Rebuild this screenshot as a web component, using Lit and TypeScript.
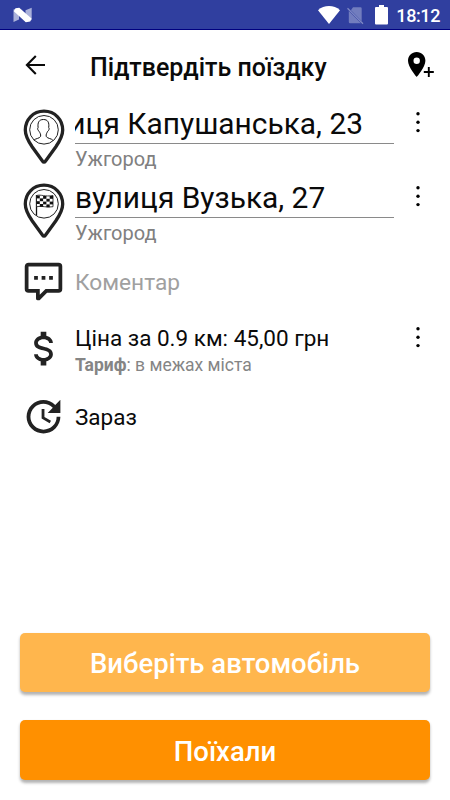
import { LitElement, html, css, svg, nothing } from "lit";
import { customElement, property } from "lit/decorators.js";

const base = css`
  :host { display: block; font-family: Roboto, "Noto Sans", sans-serif; color: #0a0a0a; }
  svg { display: block; }
  * { box-sizing: border-box; }
`;

const pinOutline = svg`
  <path d="M23 2.200C11.800 2.200 4.300 10.800 4.300 21c0 6.800 3.600 12 6.800 16.700L21.600 52.200c.8 1.100 2 1.100 2.800 0L34.900 37.700C38.100 33 41.700 27.800 41.700 21 41.700 10.800 34.200 2.200 23 2.200z" fill="#fff" stroke="#222" stroke-width="3.300"/>
  <circle cx="23" cy="20.800" r="14.300" fill="none" stroke="#222" stroke-width="1"/>`;

const flagCells = [
  [0, 0], [2, 0], [4, 0], [1, 1], [3, 1], [0, 2], [2, 2], [4, 2], [1, 3], [3, 3],
];

const icons = {
  person: html`<svg width="46" height="56" viewBox="0 0 46 56">${pinOutline}
    <path d="M13.500 31.300c1.200-1.900 6-1.700 6.700-4 .4-2-.6-3.300-1.500-5-1.500-.8-1.800-3.300-1-3.700-.6-5 .8-8.100 5.300-8.100s6 3.100 5.300 8.100c.8.4.5 2.900-1 3.700-.8 1.700-1.900 3-1.500 5 .7 2.300 5.500 2.100 6.700 4" fill="none" stroke="#111" stroke-width="1" transform="translate(-.6 0)"/></svg>`,
  flag: html`<svg width="46" height="56" viewBox="0 0 46 56">${pinOutline}
    <path d="M15.500 12v20.500" stroke="#111" stroke-width="1.300"/>
    <path d="M15.500 12.500c5-1.300 8 1.500 16.500 0v11.200c-7 1.300-10-1.300-16.500 0z" fill="#fff" stroke="#111" stroke-width=".8"/>
    ${flagCells.map(([c, r]) => svg`<rect x=${15.5 + c * 3.3} y=${12.6 + r * 2.8 + (c > 1 ? 0.4 : 0)} width="3.300" height="2.800" fill="#111"/>`)}</svg>`,
  comment: html`<svg width="45" height="45" viewBox="0 0 24 24" fill="#222"><path d="M9,22A1,1 0 0,1 8,21V18H4A2,2 0 0,1 2,16V4C2,2.890 2.900,2 4,2H20A2,2 0 0,1 22,4V16A2,2 0 0,1 20,18H13.900L10.200,21.710C10,21.900 9.750,22 9.500,22H9M10,16V19.080L13.080,16H20V4H4V16H10M17,11H15V9H17V11M13,11H11V9H13V11M9,11H7V9H9V11Z"/></svg>`,
  dollar: html`<svg width="45" height="45" viewBox="0 0 24 24" fill="#222"><path d="M7,15H9C9,16.080 10.370,17 12,17C13.630,17 15,16.080 15,15C15,13.900 13.960,13.500 11.760,12.970C9.640,12.440 7,11.780 7,9C7,7.210 8.470,5.690 10.500,5.180V3H13.500V5.180C15.530,5.690 17,7.210 17,9H15C15,7.920 13.630,7 12,7C10.370,7 9,7.920 9,9C9,10.100 10.040,10.500 12.240,11.030C14.360,11.560 17,12.220 17,15C17,16.790 15.530,18.310 13.500,18.820V21H10.500V18.820C8.470,18.310 7,16.790 7,15Z"/></svg>`,
  clock: html`<svg width="45" height="45" viewBox="0 0 24 24" fill="#222"><path d="M21 10.120h-6.780l2.740-2.820c-2.730-2.700-7.150-2.800-9.880-.1-2.730 2.710-2.730 7.080 0 9.790s7.150 2.710 9.880 0C18.320 15.650 19 14.080 19 12.100h2c0 1.980-.88 4.550-2.640 6.290-3.510 3.480-9.210 3.480-12.720 0-3.500-3.470-3.530-9.110-.02-12.580s9.140-3.470 12.650 0L21 3v7.120zM12.500 8v4.250l3.500 2.080-.72 1.210L11 13V8h1.500z"/></svg>`,
};

@customElement("status-bar")
class StatusBar extends LitElement {
  static styles = [base, css`
    .bar { display: flex; align-items: flex-start; height: 30px; background: #303f9f; border-bottom: 1px solid #00007f; padding-left: 13px; }
    .logo { margin-top: 7px; }
    .system { display: flex; margin-left: auto; padding-right: 10px; color: #fff; }
    .wifi { margin: 6px 7px 0 0; }
    .sim { margin: 7px 11px 0 0; }
    .battery { margin: 5px 8px 0 0; }
    .time { font-size: 18px; line-height: 31px; font-weight: 500; letter-spacing: -0.4px; white-space: nowrap; }
  `];
  render() {
    return html`<div class="bar">
      <svg class="logo" width="20" height="16" viewBox="0 0 20 16">
        <path d="M.500 2.500L6 1v11.500L.500 15z M12.500 3.200L18.700.800V13L12.500 15z" fill="#aab1da"/>
        <path d="M.800 4.200L2.500 1.300 6.300.700 18.500 11.500 17.200 14.500 12.800 15.200z" fill="#fff"/>
      </svg>
      <div class="system">
        <svg class="wifi" width="22" height="18" viewBox="0 0 22 18"><path d="M11 18L0 4.300C6-1.300 16-1.300 22 4.300z" fill="#fff"/></svg>
        <svg class="sim" width="17" height="18" viewBox="0 0 17 18">
          <path d="M6 .300h7.500q1.200 0 1.200 1.200v12.800L3.900 3.300z M1.800 4L14 16.200H3q-1.200 0-1.200-1.200z" fill="#727dbe"/>
          <path d="M.500 1.300L16 16.800" stroke="#7f89c5" stroke-width="1.300"/>
        </svg>
        <svg class="battery" width="13" height="20" viewBox="0 0 13 20"><path d="M4 0h5v2h3q1 0 1 1v15.500q0 1-1 1H1q-1 0-1-1V3q0-1 1-1h3z" fill="#fff"/></svg>
        <span class="time">18:12</span>
      </div>
    </div>`;
  }
}

@customElement("top-bar")
class TopBar extends LitElement {
  static styles = [base, css`
    .bar { display: flex; align-items: center; height: 74px; padding: 0 15px 0 25px; }
    .back { margin-right: 44px; margin-bottom: 4px; }
    .title { font-size: 25px; font-weight: 500; white-space: nowrap; flex: 1; line-height: 30px; padding-top: 1px; }
    .pin { margin-bottom: 4px; }
  `];
  render() {
    return html`<div class="bar">
      <svg class="back" width="21" height="22" viewBox="0 0 21 22" fill="none" stroke="#0a0a0a" stroke-width="2.100"><path d="M20 11H2.500M10.800 2L1.900 11l8.900 9"/></svg>
      <div class="title">Підтвердіть поїздку</div>
      <svg class="pin" width="28" height="28" viewBox="0 0 28 28">
        <path fill-rule="evenodd" d="M9.700 1C4.900 1 1 4.900 1 9.700c0 6.500 8.700 16.300 8.700 16.300s8.700-9.800 8.700-16.300C18.400 4.900 14.500 1 9.700 1zm0 5.500a3.200 3.200 0 1 1 0 6.400 3.200 3.200 0 0 1 0-6.400z" fill="#000"/>
        <path d="M16.800 21h10M21.800 16v10" stroke="#000" stroke-width="1.900"/>
      </svg>
    </div>`;
  }
}

@customElement("form-row")
class FormRow extends LitElement {
  @property() icon: keyof typeof icons = "clock";
  @property({ type: Boolean }) menu = false;
  static styles = [base, css`
    .row { display: grid; grid-template-columns: 75px 319px 56px; height: 100%; }
    .icon { display: flex; align-items: center; padding-left: 21px; padding-bottom: var(--icon-lift, 0px); }
    .icon svg { flex: none; }
    .content { min-width: 0; }
    .menu { padding: var(--menu-top, 7px) 0 0 21px; }
  `];
  render() {
    return html`<div class="row">
      <div class="icon">${icons[this.icon]}</div>
      <div class="content"><slot></slot></div>
      ${this.menu
        ? html`<div class="menu"><svg width="6" height="22" viewBox="0 0 6 22"><circle cx="3" cy="2.700" r="1.700"/><circle cx="3" cy="11.200" r="1.700"/><circle cx="3" cy="19.600" r="1.700"/></svg></div>`
        : nothing}
    </div>`;
  }
}

@customElement("app-root")
class AppRoot extends LitElement {
  static styles = [base, css`
    .screen { display: flex; flex-direction: column; width: 450px; height: 800px; background: #fff; overflow: hidden; }
    .address-row { height: 74px; --icon-lift: 8px; }
    .address { display: flex; height: 40px; line-height: 39px; font-size: 29.900px; border-bottom: 1px solid #8a8a8a; overflow: hidden; white-space: nowrap; }
    .address.scrolled { justify-content: flex-end; padding-right: 31px; }
    .city { margin-top: 2px; font-size: 20px; line-height: 26px; color: #808080; }
    .comment-row { height: 61px; --icon-lift: 2px; }
    .comment { font-size: 22.700px; line-height: 61px; color: #a0a0a0; }
    .price-row { height: 70px; --menu-top: 13px; }
    .price { padding-top: 10px; font-size: 22.500px; line-height: 30px; white-space: nowrap; }
    .tariff { font-size: 17.500px; line-height: 25px; color: #858585; }
    .tariff b { font-weight: 700; }
    .time-row { height: 68px; --icon-lift: 2px; }
    .time { font-size: 22.500px; line-height: 68px; }
    .actions { display: flex; flex-direction: column; gap: 28px; margin-top: auto; padding: 0 20px 20px; }
    .button { height: 59.750px; border: 0; border-radius: 5px; font: 500 27.500px/58px Roboto, "Noto Sans", sans-serif; color: #fff; text-align: center; padding: 2px 0 0; box-shadow: 0 2.500px 3px rgba(0, 0, 0, 0.3); }
    .pick { background: #ffb64d; }
    .go { background: #ff9000; padding-top: 3px; }
  `];
  render() {
    return html`<main class="screen">
      <status-bar></status-bar>
      <top-bar></top-bar>
      <form-row class="address-row" icon="person" menu>
        <div class="address scrolled"><span>вулиця Капушанська, 23</span></div>
        <div class="city">Ужгород</div>
      </form-row>
      <form-row class="address-row" icon="flag" menu>
        <div class="address"><span>вулиця Вузька, 27</span></div>
        <div class="city">Ужгород</div>
      </form-row>
      <form-row class="comment-row" icon="comment"><div class="comment">Коментар</div></form-row>
      <form-row class="price-row" icon="dollar" menu>
        <div class="price">Ціна за 0.9 км: 45,00 грн</div>
        <div class="tariff"><b>Тариф</b>: в межах міста</div>
      </form-row>
      <form-row class="time-row" icon="clock"><div class="time">Зараз</div></form-row>
      <div class="actions">
        <button class="button pick">Виберіть автомобіль</button>
        <button class="button go">Поїхали</button>
      </div>
    </main>`;
  }
}
